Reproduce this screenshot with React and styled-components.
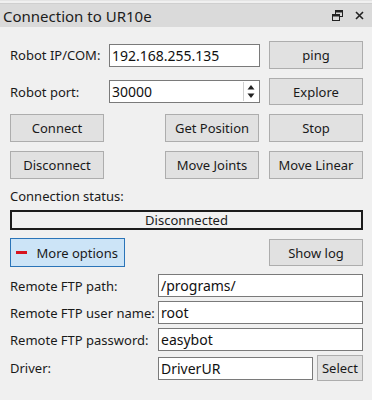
import React from "react";
import styled, { createGlobalStyle } from "styled-components";

const GlobalStyle = createGlobalStyle`
  html, body {
    margin: 0;
    padding: 0;
    background: #f0f0f0;
  }
  body {
    font-family: "Noto Sans", "Open Sans", sans-serif;
    font-size: 13px;
    color: #1a1a1a;
  }
`;

const Panel = styled.div`
  width: 372px;
  height: 400px;
  background: #f0f0f0;
  padding-top: 2px;
  box-sizing: border-box;
  border-top: 1px solid #e4e4e4;
`;

const TitleBar = styled.div`
  height: 23px;
  background: #dadada;
  display: flex;
  align-items: center;
  padding: 0 8px 0 3px;
  border-top: 1px solid #cfcfcf;
`;

const Title = styled.span`
  flex: 1;
  font-size: 15px;
  color: #1c1c1c;
`;

const TitleIcons = styled.div`
  display: flex;
  align-items: center;
  gap: 12px;
`;

const Body = styled.div`
  padding: 14px 9px 0 10px;
  display: flex;
  flex-direction: column;
`;

const FormGrid = styled.div`
  display: grid;
  grid-template-columns: 90px 151px 94px;
  column-gap: 9px;
  row-gap: 9px;
  align-items: center;
`;

const ButtonGrid = styled.div`
  display: grid;
  grid-template-columns: 94px 1fr 94px 94px;
  column-gap: 10px;
  row-gap: 9px;
  margin-top: 9px;
`;

const Label = styled.span`
  white-space: nowrap;
`;

const Button = styled.button`
  height: ${p => p.h || 28}px;
  font-family: inherit;
  font-size: 13px;
  color: #1a1a1a;
  background: ${p => (p.active ? "#cce4f7" : "#e1e1e1")};
  border: 1px solid ${p => (p.active ? "#2a74b8" : "#adadad")};
  padding: 0 6px;
  display: flex;
  align-items: center;
  justify-content: center;
  gap: 9px;
  white-space: nowrap;
  grid-column: ${p => p.col || "auto"};
`;

const InputBox = styled.div`
  height: 23px;
  box-sizing: border-box;
  background: #fff;
  border: 1px solid #7a7a7a;
  display: flex;
  align-items: center;
  padding-left: 2px;
  font-size: 14px;
  color: #111;
`;

const InputText = styled.span`
  flex: 1;
`;

const Spin = styled.div`
  width: 14px;
  height: 19px;
  margin-right: 1px;
  display: flex;
  flex-direction: column;
  justify-content: center;
  align-items: center;
  border-left: 1px solid #d0d0d0;
`;

const StatusLabel = styled.div`
  margin-top: 8px;
  line-height: 18px;
`;

const StatusBox = styled.div`
  margin-top: 5px;
  height: 20px;
  box-sizing: border-box;
  border: 2px solid #1b1b1b;
  display: flex;
  align-items: center;
  justify-content: center;
  font-size: 13px;
`;

const OptionsRow = styled.div`
  margin-top: 8px;
  display: flex;
  justify-content: space-between;
  align-items: center;
`;

const Minus = styled.span`
  width: 17px;
  height: 3px;
  background: #d7141f;
`;

const FtpGrid = styled.div`
  margin-top: 7px;
  display: grid;
  grid-template-columns: 148px 1fr;
  row-gap: 4px;
  align-items: center;
`;

const DriverRow = styled.div`
  display: flex;
  align-items: center;
  gap: 4px;
`;

const FloatIcon = () => (
  <svg width="11" height="11" viewBox="0 0 11 11">
    <rect x="3.5" y="0.5" width="7" height="6" fill="none" stroke="#222" strokeWidth="1" />
    <rect x="3.5" y="0.5" width="7" height="2" fill="#222" />
    <rect x="0.5" y="4.5" width="7" height="6" fill="#dadada" stroke="#222" strokeWidth="1" />
    <rect x="0.5" y="4.5" width="7" height="2" fill="#222" />
  </svg>
);

const CloseIcon = () => (
  <svg width="9" height="9" viewBox="0 0 9 9">
    <path d="M1 1 L8 8 M8 1 L1 8" stroke="#222" strokeWidth="1.6" />
  </svg>
);

const SpinArrows = () => (
  <Spin>
    <svg width="8" height="17" viewBox="0 0 8 17">
      <path d="M4 2 L7.5 6.5 L0.5 6.5 Z" fill="#222" />
      <path d="M4 15 L7.5 10.5 L0.5 10.5 Z" fill="#222" />
    </svg>
  </Spin>
);

const Field = ({ value, spin, style }) => (
  <InputBox style={style}>
    <InputText>{value}</InputText>
    {spin && <SpinArrows />}
  </InputBox>
);

export default function App() {
  return (
    <Panel>
      <GlobalStyle />
      <TitleBar>
        <Title>Connection to UR10e</Title>
        <TitleIcons>
          <FloatIcon />
          <CloseIcon />
        </TitleIcons>
      </TitleBar>
      <Body>
        <FormGrid>
          <Label>Robot IP/COM:</Label>
          <Field value="192.168.255.135" />
          <Button>ping</Button>
          <Label>Robot port:</Label>
          <Field value="30000" spin />
          <Button h={27}>Explore</Button>
        </FormGrid>
        <ButtonGrid>
          <Button>Connect</Button>
          <Button col="3">Get Position</Button>
          <Button>Stop</Button>
          <Button>Disconnect</Button>
          <Button col="3">Move Joints</Button>
          <Button>Move Linear</Button>
        </ButtonGrid>
        <StatusLabel>Connection status:</StatusLabel>
        <StatusBox>Disconnected</StatusBox>
        <OptionsRow>
          <Button active h={29} style={{ width: 115, justifyContent: "flex-start", paddingLeft: 5 }}>
            <Minus />
            More options
          </Button>
          <Button h={27} style={{ width: 94 }}>Show log</Button>
        </OptionsRow>
        <FtpGrid>
          <Label>Remote FTP path:</Label>
          <Field value="/programs/" />
          <Label>Remote FTP user name:</Label>
          <Field value="root" />
          <Label>Remote FTP password:</Label>
          <Field value="easybot" />
          <Label>Driver:</Label>
          <DriverRow>
            <Field value="DriverUR" style={{ flex: 1 }} />
            <Button h={26} style={{ width: 46, padding: 0 }}>Select</Button>
          </DriverRow>
        </FtpGrid>
      </Body>
    </Panel>
  );
}
